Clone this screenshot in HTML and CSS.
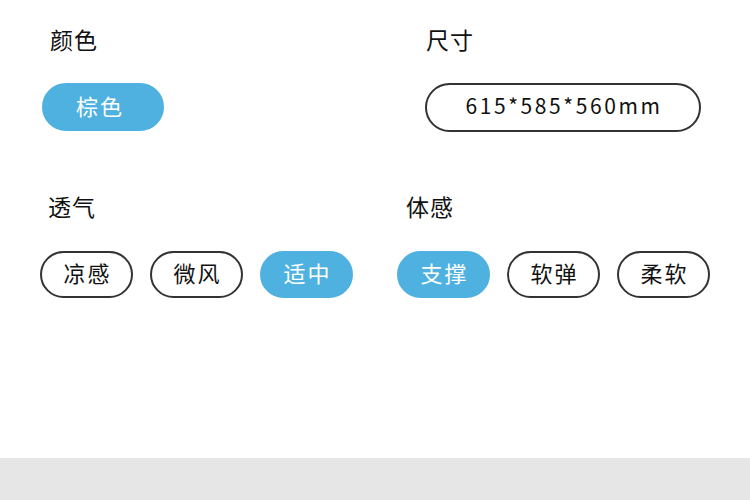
FILE: index.html
```html
<!DOCTYPE html>
<html lang="zh-CN">
<head>
<meta charset="utf-8">
<link rel="stylesheet" href="styles.css">
</head>
<body>
<div class="page">
  <main class="main">
    <section class="row row-top">
      <div class="group group-color">
        <div class="label">颜色</div>
        <div class="opts">
          <span class="pill pill-wide active">棕色</span>
        </div>
      </div>
      <div class="group group-size">
        <div class="label label-tight">尺寸</div>
        <div class="opts">
          <span class="pill pill-size">615*585*560mm</span>
        </div>
      </div>
    </section>
    <section class="row row-bottom">
      <div class="group group-air">
        <div class="label">透气</div>
        <div class="opts">
          <span class="pill">凉感</span>
          <span class="pill">微风</span>
          <span class="pill active">适中</span>
        </div>
      </div>
      <div class="group group-feel">
        <div class="label">体感</div>
        <div class="opts">
          <span class="pill active">支撑</span>
          <span class="pill">软弹</span>
          <span class="pill">柔软</span>
        </div>
      </div>
    </section>
  </main>
  <footer class="footer"></footer>
</div>
</body>
</html>
```

FILE: styles.css
```css
* { box-sizing: border-box; }
html, body { margin: 0; padding: 0; background: #fff; }
body {
  font-family: "Noto Sans CJK SC", "Noto Sans", sans-serif;
  color: #111;
}
.page {
  width: 750px;
  height: 500px;
  display: flex;
  flex-direction: column;
}
.main {
  flex: 0 0 458px;
  display: flex;
  flex-direction: column;
}
.footer {
  flex: 1;
  background: #e6e6e6;
}
.row {
  display: flex;
}
.row-top {
  padding-top: 24px;
  padding-left: 42px;
}
.row-bottom {
  padding-top: 59px;
  padding-left: 40px;
}
.group {
  display: flex;
  flex-direction: column;
}
.group-color { width: 383px; }
.group-air { width: 357px; }
.label {
  font-size: 23px;
  line-height: 30px;
  height: 30px;
  padding-left: 8px;
  letter-spacing: 1px;
}
.group-feel .label { padding-left: 9px; }
.label-tight { padding-left: 1px; }
.row-top .opts { margin-top: 29px; }
.row-bottom .opts { margin-top: 30px; }
.opts {
  display: flex;
  gap: 17px;
}
.pill {
  display: flex;
  align-items: center;
  justify-content: center;
  width: 93px;
  height: 47px;
  border: 2px solid #333;
  border-radius: 24px;
  font-size: 22px;
  letter-spacing: 2px;
  padding: 0 0 5px 2px;
  color: #111;
  background: #fff;
}
.pill.active {
  background: #4fb1e0;
  border-color: #4fb1e0;
  color: #fff;
}
.pill-wide {
  width: 122px;
  height: 48px;
  font-size: 22px;
  padding: 0 6px 5px 0;
}
.pill-size {
  width: 276px;
  height: 49px;
  border-radius: 25px;
  font-size: 21px;
  letter-spacing: 2.6px;
}
```
